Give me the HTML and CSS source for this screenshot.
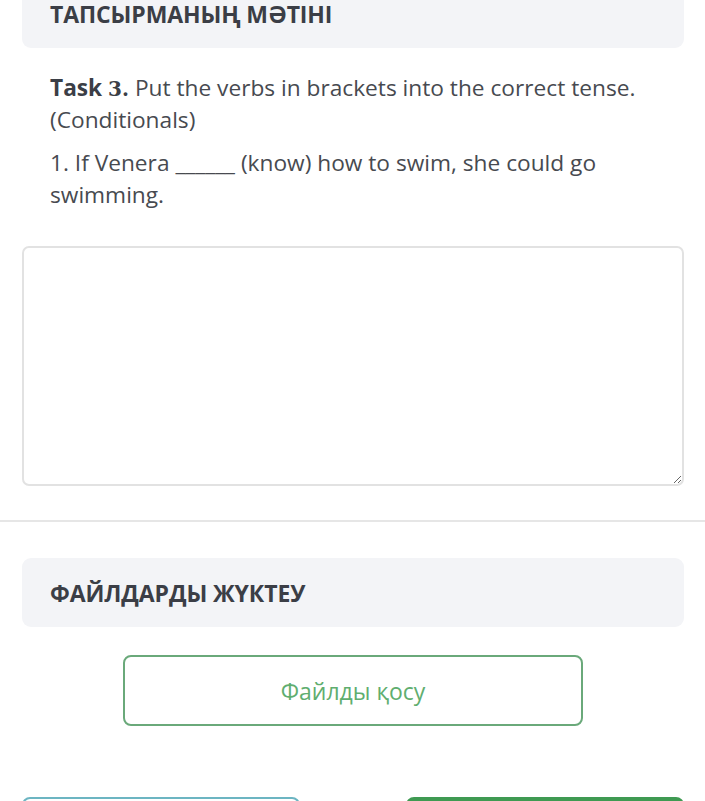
FILE: index.html
```html
<!DOCTYPE html>
<html>
	<head>
		<meta charset="utf-8">
		<link rel="stylesheet" href="styles.css">
	</head>
	<body>
		<section class="task">
			<div class="section-head first">
				<h2>ТАПСЫРМАНЫҢ МӘТІНІ</h2>
			</div>
			<div class="task-text">
				<p><b>Task <span class="num">3.</span></b> Put the verbs in brackets into the correct tense. (Conditionals)</p>
				<p>1. If Venera ______ (know) how to swim, she could go swimming.</p>
			</div>
			<textarea class="answer"></textarea>
		</section>
		<hr class="divider">
		<section class="files">
			<div class="section-head">
				<h2>ФАЙЛДАРДЫ ЖҮКТЕУ</h2>
			</div>
			<button class="add-file" type="button">Файлды қосу</button>
		</section>
		<menu class="actions">
			<li><button class="btn-outline" type="button"></button></li>
			<li><button class="btn-fill" type="button"></button></li>
		</menu>
	</body>
</html>
```

FILE: styles.css
```css
:root {
	--head-bg: #f3f4f7;
	--head-color: #3b3e46;
	--text-color: #474a50;
	--green: #5fae6f;
	--border: #e2e2e2;
}
html, body {
	margin: 0;
	background: #ffffff;
	font-family: "Open Sans", "Noto Sans", sans-serif;
	color: var(--text-color);
	overflow: hidden;
}
body {
	height: 801px;
}

section {
	padding: 0 21px 0 22px;
}

.section-head {
	background: var(--head-bg);
	border-radius: 9px;
	height: 69px;
	display: flex;
	align-items: center;
	padding: 0 28px;
}
.section-head.first {
	margin-top: -21px;
}
.section-head h2 {
	margin: 0;
	font-size: 23px;
	font-weight: 700;
	color: var(--head-color);
	letter-spacing: -0.1px;
}

.task-text {
	padding: 24px 28px 0;
	font-size: 22.7px;
	line-height: 32px;
}
.task-text p {
	margin: 0 0 11px;
}
.task-text p:last-child {
	margin-bottom: 0;
}
.task-text b {
	font-weight: 700;
	color: var(--head-color);
}
.num {
	font-family: "DejaVu Serif", serif;
	font-size: 20px;
	line-height: 0;
}

.answer {
	display: block;
	box-sizing: border-box;
	width: 100%;
	height: 240px;
	margin-top: 35px;
	border: 2px solid var(--border);
	border-radius: 7px;
	background: #ffffff;
	resize: vertical;
}

.divider {
	margin: 34px 0 36px;
	border: 0;
	height: 2px;
	background: #e6e6e6;
}

.add-file {
	display: block;
	box-sizing: border-box;
	width: 460px;
	height: 71px;
	margin: 28px auto 0 101px;
	border: 2px solid #6aa97a;
	border-radius: 8px;
	background: #ffffff;
	color: var(--green);
	font-family: "Open Sans", sans-serif;
	font-size: 23px;
}

.actions {
	list-style-type: none;
	display: flex;
	justify-content: space-between;
	padding: 0 21px 0 22px;
	margin: 71px 0 0;
}
.actions button {
	width: 278px;
	height: 60px;
	border-radius: 8px;
}
.btn-outline {
	border: 2px solid #6cb5c2;
	background: #ffffff;
}
.btn-fill {
	border: 2px solid #3f9a52;
	background: #3f9a52;
}
```
